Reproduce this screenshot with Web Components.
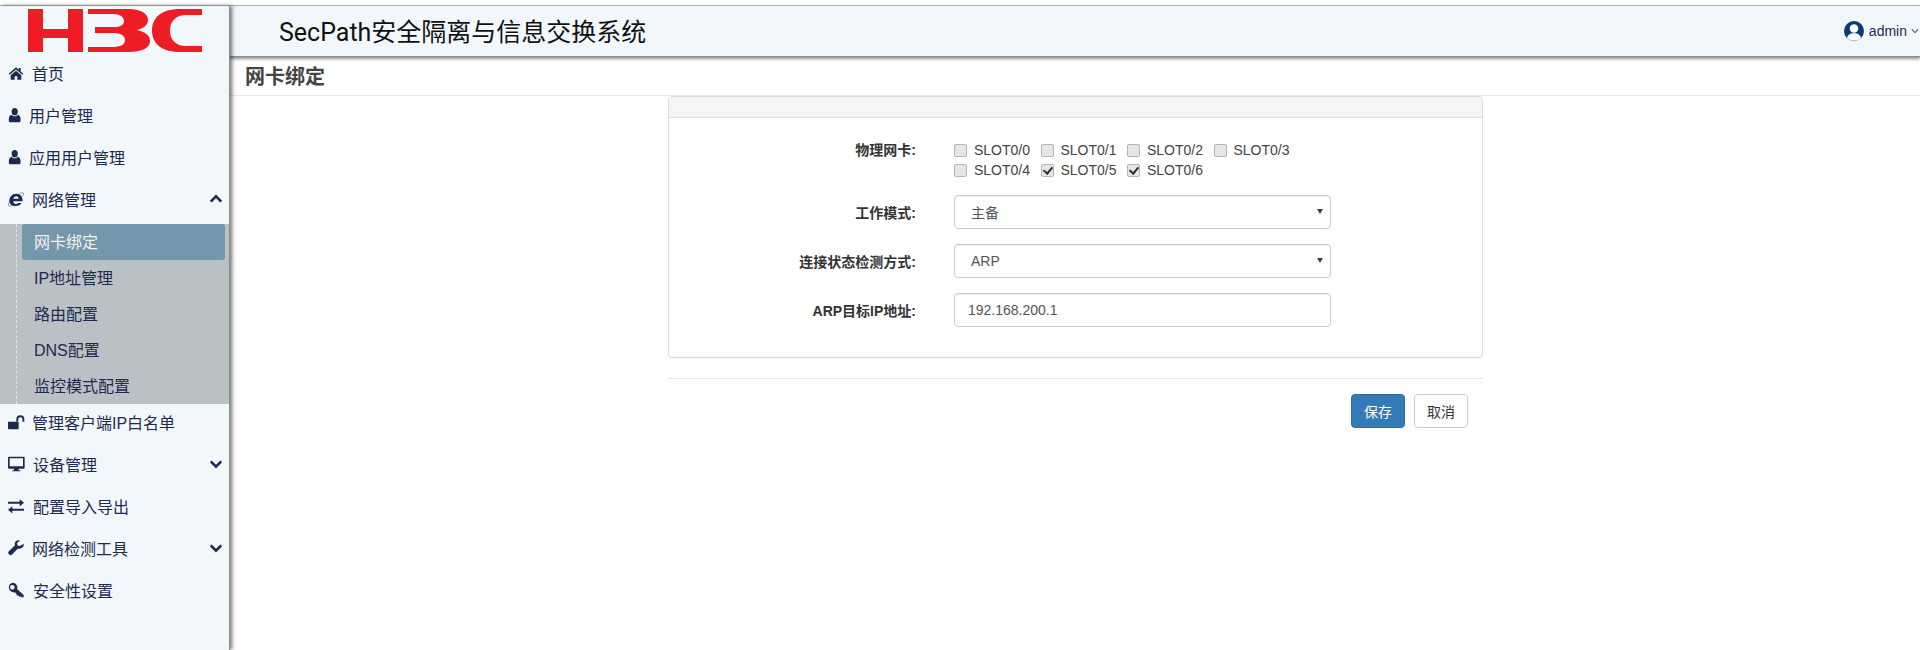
<!DOCTYPE html>
<html>
<head>
<meta charset="utf-8">
<title>SecPath</title>
<style>
  html, body { margin: 0; height: 100%; background: #fff; overflow: hidden; }
  body { font: 14px "Liberation Sans", "Noto Sans CJK SC", sans-serif; color: #333; }
</style>
</head>
<body>
<app-shell>
  <side-nav slot="side">
    <nav-item icon="home" icon-gap="8">首页</nav-item>
    <nav-item icon="user" icon-gap="5">用户管理</nav-item>
    <nav-item icon="user" icon-gap="5">应用用户管理</nav-item>
    <nav-item icon="ie" icon-gap="8" arrow="up">网络管理</nav-item>
    <nav-sub>
      <sub-item active>网卡绑定</sub-item>
      <sub-item>IP地址管理</sub-item>
      <sub-item>路由配置</sub-item>
      <sub-item>DNS配置</sub-item>
      <sub-item>监控模式配置</sub-item>
    </nav-sub>
    <nav-item icon="unlock" icon-gap="8">管理客户端IP白名单</nav-item>
    <nav-item icon="desktop" icon-gap="9" arrow="down">设备管理</nav-item>
    <nav-item icon="exchange" icon-gap="9">配置导入导出</nav-item>
    <nav-item icon="wrench" icon-gap="8" arrow="down">网络检测工具</nav-item>
    <nav-item icon="key" icon-gap="9">安全性设置</nav-item>
  </side-nav>
  <top-bar slot="top"></top-bar>
  <page-title slot="title">网卡绑定</page-title>
  <bond-form slot="main"></bond-form>
</app-shell>

<script>
// icon shapes, 24 box
const ICONS = {
  home: '<path d="M12 3.5 1 13l1.5 1.8L12 6.8l9.500 8L23 13l-4-3.400V4.500h-3v2.600z"/><path d="M12 8.500 4 15.200V22h6v-5h4v5h6v-6.800z"/>',
  user: '<g transform="scale(.84 1)"><circle cx="12" cy="7" r="5.500"/><path d="M6.500 11.500c1.500 1.500 3.400 2.300 5.500 2.300s4-.8 5.500-2.300c3 .4 5 3 5 6.500v2.200c0 1.700-1.300 2.800-3 2.800H4.500c-1.700 0-3-1.100-3-2.800V18c0-3.500 2-6.100 5-6.500z"/></g>',
  ie: '<path fill-rule="evenodd" d="M12.500 4C6 4 2 9 2 14.500 2 19.500 6 22.500 11.500 22.500c4 0 7-1.500 9-4.500h-5c-1 1-2.500 1.500-3.500 1.500-2.500 0-4-1.500-4-4h14C22.500 9 19 4 12.500 4zM8 11.500C8.300 9.500 10 8 12.300 8c2.200 0 3.700 1.500 3.700 3.500z"/><path d="M17 4.500C20 2.500 22.500 2 23 3c.5 1 0 3-1 5M5 12C2 16 0 20.500 1 22c1 1.300 4 .5 7-1" fill="none" stroke="#1c2b4e" stroke-width="1" opacity=".7"/>',
  unlock: '<path d="M0 11.500h14.500a1.500 1.500 0 0 1 1.500 1.500v8.500a1.500 1.500 0 0 1-1.500 1.500H1.500A1.500 1.500 0 0 1 0 21.500z"/><path d="M12.500 11.500V8a6 6 0 0 1 12 0v3.500h-2.800V8a3.200 3.200 0 0 0-6.400 0v3.500z"/>',
  desktop: '<path fill-rule="evenodd" d="M1.800 1h21.400A1.800 1.800 0 0 1 25 2.800v14.400a1.800 1.800 0 0 1-1.800 1.800H16v2.500h2.500V23h-12v-1.500H9V19H1.800A1.800 1.800 0 0 1 0 17.200V2.800A1.800 1.800 0 0 1 1.800 1zM2.500 3.500v12h20v-12z"/>',
  exchange: '<path d="M0 8.500h17.500V4.500L24 10l-6.500 5.500v-4H0z" transform="translate(0 -2.800)"/><path d="M24 15.500H6.500v-4L0 17l6.500 5.500v-4H24z" transform="translate(0 .8)"/>',
  wrench: '<path fill-rule="evenodd" d="M23.500 5.800c.6 3.300-1.800 7.200-6.300 7.200-.8 0-1.500-.1-2.100-.4L6 21.800a3 3 0 0 1-4.200 0l-.6-.6a3 3 0 0 1 0-4.200l9.300-9.100c-.3-.7-.4-1.400-.4-2.100C10.100 1.800 14 -.6 17.800.6l-4.300 3.900.7 3.700 3.700.8z"/>',
  key: '<path fill-rule="evenodd" d="M7 1a7 7 0 0 1 6.600 9.400l9.900 9.100V23H20l-1.500-1.500-1.500 1-1.500-2.500-2 .5-1-3-2.300-2.100A7 7 0 1 1 7 1zM6.500 4.500a3.500 3.500 0 1 0 0 7 3.500 3.500 0 0 0 0-7z"/>'
};

class AppShell extends HTMLElement {
  constructor() {
    super();
    this.attachShadow({ mode: 'open' }).innerHTML = `
      <style>
        :host { display: block; height: 650px; }
        .strip { height: 5px; background: #fff; border-bottom: 1px solid #b4b4b4; }
        .body { display: grid; grid-template-columns: 230px 1fr; height: 644px; }
        .col { display: flex; flex-direction: column; min-width: 0; }
      </style>
      <div class="strip"></div>
      <div class="body">
        <slot name="side"></slot>
        <div class="col">
          <slot name="top"></slot>
          <slot name="title"></slot>
          <slot name="main"></slot>
        </div>
      </div>`;
  }
}

class SideNav extends HTMLElement {
  constructor() {
    super();
    this.attachShadow({ mode: 'open' }).innerHTML = `
      <style>
        :host { display: block; background: #f2f7fc; border-right: 1px solid #8c8c8c; box-shadow: 2px 0 4px rgba(0,0,0,.55); position: relative; z-index: 2; width: 230px; box-sizing: border-box; }
        .logo { height: 46px; padding: 3px 0 0 28px; box-sizing: border-box; }
        svg { display: block; }
      </style>
      <div class="logo">
        <svg width="175" height="43" viewBox="0 0 175 43" fill="#ee1c25">
          <path d="M0 0h15v20h25V0h15v43H40V29H15v14H0z"/>
          <path d="M60 0H100C114 0 120 5 120 11C120 16 116 19 109 21C117 23 122 26 122 32C122 39 114 43 100 43H60V38H84C92 38 97 36 97 31C97 27 93 24 86 24H67V18H86C92 18 96 16 96 12C96 8 92 5 85 5H60Z"/>
          <path d="M174 0H152C133 0 124 9 124 21.500C124 34 133 43 152 43H174V37H158C148 37 142 31 142 21.500C142 12 148 6 158 6H174Z"/>
        </svg>
      </div>
      <slot></slot>`;
  }
}

class NavItem extends HTMLElement {
  constructor() {
    super();
    this.attachShadow({ mode: 'open' });
  }
  connectedCallback() {
    const icon = ICONS[this.getAttribute('icon')] || '';
    const gap = this.getAttribute('icon-gap') || '8';
    const arrow = this.getAttribute('arrow');
    const chev = arrow === 'up' ? 'M2 11 8 5l6 6' : 'M2 5l6 6 6-6';
    this.shadowRoot.innerHTML = `
      <style>
        :host { display: block; }
        .row { display: flex; align-items: center; height: 42px; padding: 0 6px 0 8px; color: #1c2b4e; font-size: 16px; }
        .ic { width: 16px; height: 16px; flex: none; fill: #1c2b4e; margin-right: ${gap}px; overflow: visible; }
        .label { flex: 1; white-space: nowrap; }
        .chev { width: 14px; height: 14px; flex: none; fill: none; stroke: #1c2b4e; stroke-width: 3; }
      </style>
      <div class="row">
        <svg class="ic" viewBox="0 0 24 24">${icon}</svg>
        <span class="label"><slot></slot></span>
        ${arrow ? `<svg class="chev" viewBox="0 0 16 16"><path d="${chev}"/></svg>` : ''}
      </div>`;
  }
}

class NavSub extends HTMLElement {
  constructor() {
    super();
    this.attachShadow({ mode: 'open' }).innerHTML = `
      <style>
        :host { display: block; background: #bac1c5; margin: 4px 0 -3px; padding-left: 22px; padding-right: 4px; position: relative; }
        .rule { position: absolute; left: 16px; top: 0; bottom: 0; border-left: 1px dashed #dfe3e5; }
      </style>
      <div class="rule"></div>
      <slot></slot>`;
  }
}

class SubItem extends HTMLElement {
  constructor() {
    super();
    this.attachShadow({ mode: 'open' }).innerHTML = `
      <style>
        :host { display: block; height: 36px; line-height: 38px; padding-left: 12px; font-size: 16px; color: #1c2b4e; border-radius: 3px; white-space: nowrap; }
        :host([active]) { background: #7397ab; color: #f6f1ea; }
      </style>
      <slot></slot>`;
  }
}

class TopBar extends HTMLElement {
  constructor() {
    super();
    this.attachShadow({ mode: 'open' }).innerHTML = `
      <style>
        :host { display: flex; align-items: center; height: 50px; flex: none; background: #f2f7fc; border-bottom: 1px solid #8c8c8c; box-shadow: 0 2px 3px rgba(0,0,0,.45); padding-left: 49px; padding-right: 1px; position: relative; z-index: 1; }
        h1 { margin: 0 0 2px; flex: 1; font: 400 25px "Roboto", "Noto Sans CJK SC", sans-serif; color: #111; white-space: nowrap; }
        .user { display: flex; align-items: center; color: #1c2b4e; font-size: 14px; }
        .user svg.av { width: 20px; height: 20px; margin-right: 5px; }
        .user svg.ch { width: 8px; height: 8px; margin-left: 4px; fill: none; stroke: #40506f; stroke-width: 1.300; }
      </style>
      <h1>SecPath安全隔离与信息交换系统</h1>
      <div class="user">
        <svg class="av" viewBox="0 0 20 20"><circle cx="10" cy="10" r="10" fill="#0c3a76"/><circle cx="10" cy="7.500" r="4.300" fill="#fff"/><path d="M3 17c.5-3 3-4.200 5-4.700h4c2 .5 4.500 1.700 5 4.700a10 10 0 0 1-14 0z" fill="#fff"/></svg>
        admin
        <svg class="ch" viewBox="0 0 10 10"><path d="M1 3l4 4 4-4"/></svg>
      </div>`;
  }
}

class PageTitle extends HTMLElement {
  constructor() {
    super();
    this.attachShadow({ mode: 'open' }).innerHTML = `
      <style>
        :host { display: flex; align-items: center; flex: none; box-sizing: content-box; height: 36px; padding: 0 0 2px 15px; border-bottom: 1px solid #e5e5e5; font-size: 20px; font-weight: 700; color: #444; }
      </style>
      <slot></slot>`;
  }
}

class BondForm extends HTMLElement {
  constructor() {
    super();
    const slots = [['0/0'], ['0/1'], ['0/2'], ['0/3'], ['0/4'], ['0/5', 1], ['0/6', 1]];
    this.attachShadow({ mode: 'open' }).innerHTML = `
      <style>
        :host { display: block; width: 815px; margin: 0 0 0 438px; }
        .panel { height: 262px; box-sizing: border-box; border: 1px solid #ddd; border-radius: 4px; box-shadow: 0 1px 1px rgba(0,0,0,.05); }
        .head { height: 20px; background: #f5f5f5; border-bottom: 1px solid #ddd; border-radius: 3px 3px 0 0; }
        .grid { display: grid; grid-template-columns: 247px 377px; column-gap: 38px; padding-top: 22px; align-items: center; font-size: 14px; }
        label.f { text-align: right; font-weight: 700; color: #333; }
        .checks { display: grid; grid-template-columns: repeat(4, 86.500px); width: 346px; grid-auto-rows: 20px; margin-bottom: 15px; }
        .checks span { display: flex; align-items: center; white-space: nowrap; color: #444; }
        input[type=checkbox] { appearance: none; box-sizing: border-box; width: 13px; height: 13px; margin: 0 7px 0 0; background: #e6e6e6; border: 1px solid #b5b5b5; border-radius: 2px; position: relative; flex: none; }
        input[type=checkbox]:checked:after { content: ""; position: absolute; left: 3px; top: 0; width: 4px; height: 7px; border: solid #333; border-width: 0 2px 2px 0; transform: rotate(40deg); }
        .box { box-sizing: border-box; width: 377px; height: 34px; border: 1px solid #ccc; border-radius: 4px; background: #fff; color: #555; padding: 0 13px; font: 14px "Liberation Sans", "Noto Sans CJK SC", sans-serif; display: flex; align-items: center; box-shadow: inset 0 1px 1px rgba(0,0,0,.075); margin-bottom: 15px; position: relative; }
        .select:after { content: ""; position: absolute; right: 7px; top: 13px; border: 3.500px solid transparent; border-top: 5px solid #444; border-bottom: 0; }
        .select { padding-left: 16px; }
        .lb { margin-bottom: 15px; }
        .lb0 { margin-bottom: 15px; align-self: start; line-height: 20px; }
        hr { border: 0; border-top: 1px solid #e5e5e5; margin: 20px 0 15px; }
        .actions { display: flex; justify-content: flex-end; gap: 9px; padding-right: 15px; }
        .btn { box-sizing: border-box; width: 54px; height: 34px; display: flex; align-items: center; justify-content: center; border: 1px solid #ccc; border-radius: 4px; font-size: 14px; color: #333; background: #fff; }
        .btn.pri { background: #337ab7; border-color: #2e6da4; color: #fff; }
      </style>
      <div class="panel">
        <div class="head"></div>
        <div class="grid">
          <label class="f lb0">物理网卡:</label>
          <div class="checks">
            ${slots.map(([s, on]) => `<span><input type="checkbox" ${on ? 'checked' : ''}>SLOT${s}</span>`).join('')}
          </div>
          <label class="f lb">工作模式:</label>
          <div class="box select">主备</div>
          <label class="f lb">连接状态检测方式:</label>
          <div class="box select">ARP</div>
          <label class="f lb">ARP目标IP地址:</label>
          <div class="box">192.168.200.1</div>
        </div>
      </div>
      <hr>
      <div class="actions">
        <div class="btn pri">保存</div>
        <div class="btn">取消</div>
      </div>`;
  }
}

customElements.define('app-shell', AppShell);
customElements.define('side-nav', SideNav);
customElements.define('nav-item', NavItem);
customElements.define('nav-sub', NavSub);
customElements.define('sub-item', SubItem);
customElements.define('top-bar', TopBar);
customElements.define('page-title', PageTitle);
customElements.define('bond-form', BondForm);
</script>
</body>
</html>
